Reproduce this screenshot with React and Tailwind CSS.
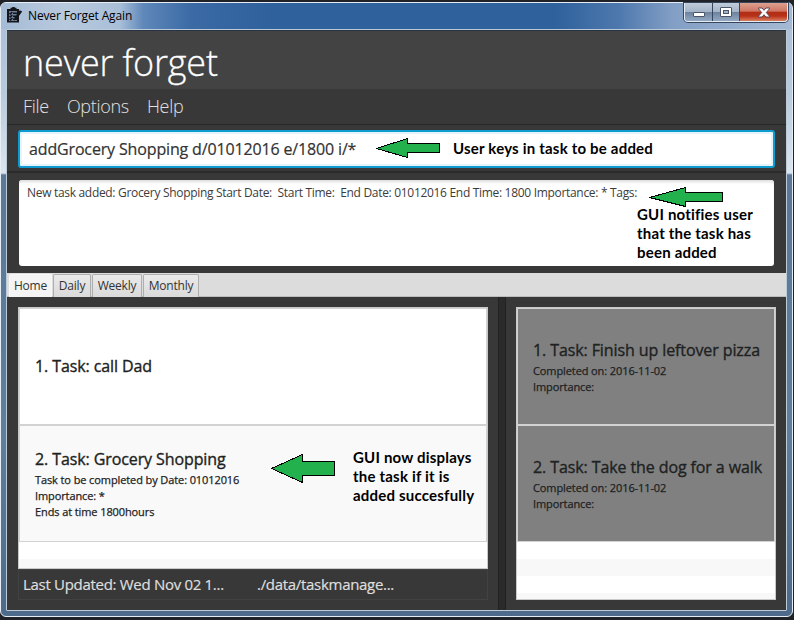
import React from "react";

const Arrow = ({ className, points, w, h }) => (
  <svg width={w} height={h} viewBox={`0 0 ${w} ${h}`} className={className} shapeRendering="crispEdges">
    <polygon points={points} fill="#22b14c" stroke="#000" strokeWidth="1" />
  </svg>
);

const ClipboardIcon = () => (
  <svg width="16" height="17" viewBox="0 0 16 17" className="shrink-0">
    <path d="M0 2h3.500V.8H5L5.500 0h2L8 .8h1.500V2H12v13.500H0z" fill="#14161c" />
    <path d="M2 4h8v10H2z" fill="#6f7f99" />
    <path d="M2.500 6l1 1 1.800-2M2.500 9l1 1 1.800-2M2.500 12l1 1 1.800-2M6 6.200h4M6 9.200h3M6 12.300h4" stroke="#14161c" strokeWidth="1.500" fill="none" />
    <path d="M7.500 10.500L12.800 3.200l2.400 1.300L9.800 12l-2.800 1.600z" fill="#14161c" />
  </svg>
);

const WindowButtons = () => (
  <div className="flex h-[19px] w-[104px] overflow-hidden rounded-b-[4px] border border-t-0 border-[#e4ebf3] shadow-[0_0_0_1px_#35465e]">
    <div className="flex w-[28px] items-center justify-center border-r border-[#37465c] bg-[linear-gradient(#bfccdb_0%,#a5b5c8_48%,#6b819c_50%,#93a9c3_100%)]">
      <div className="mt-[5px] h-[5px] w-[12px] rounded-[1px] border border-[#4b5567] bg-white" />
    </div>
    <div className="flex w-[27px] items-center justify-center border-r border-[#37465c] bg-[linear-gradient(#bfccdb_0%,#a5b5c8_48%,#6b819c_50%,#93a9c3_100%)]">
      <div className="flex h-[10px] w-[12px] items-center justify-center rounded-[1px] border border-[#4b5567] bg-white">
        <div className="h-[4px] w-[6px] border border-[#4b5567] bg-[#a3b2c9]" />
      </div>
    </div>
    <div className="flex flex-1 items-center justify-center bg-[linear-gradient(#dda090_0%,#cf7562_46%,#b22d13_50%,#b83018_72%,#d98060_100%)]">
      <svg width="12" height="11" viewBox="0 0 12 11">
        <path d="M.5 1h3.600L6 3.300 7.900 1h3.600v.8L8.300 5.500l3.200 3.700v.8H7.900L6 7.700 4.100 10H.5v-.8l3.200-3.700L.5 1.800z" fill="#fff" stroke="#5c4450" strokeWidth="1" />
      </svg>
    </div>
  </div>
);

const Task = ({ className, title, lines }) => (
  <div className={`flex flex-col justify-center px-[15px] text-[#1d2222] ${className}`}>
    <div className="mb-[2px] text-[16px] leading-[22px] tracking-[-0.1px] whitespace-nowrap [-webkit-text-stroke:0.35px_#1d2222]">{title}</div>
    {lines.map((line) => (
      <div key={line} className="text-[11px] leading-[16px] tracking-[-0.1px] whitespace-nowrap [-webkit-text-stroke:0.25px_#1d2222]">{line}</div>
    ))}
  </div>
);

const Tab = ({ active, className, children }) => (
  <div className={`flex h-[23px] items-center justify-center rounded-t-[2px] border border-b-0 text-[12px] tracking-[-0.2px] text-[#333] ${active ? "border-[#f8f8f8] bg-[#f4f4f4]" : "border-[#aeaeae] bg-[linear-gradient(#eaeaea,#dadada)]"} ${className}`}>
    {children}
  </div>
);

const Note = ({ className, children }) => (
  <div className={`absolute font-['Lato'] text-[15px] leading-[19px] font-bold tracking-[0.2px] whitespace-nowrap text-black ${className}`}>{children}</div>
);

export default function App() {
  return (
    <div className="relative h-[620px] w-[794px] overflow-hidden bg-[#202227] pt-[2px] font-['Open_Sans',sans-serif]">
      <div className="flex h-[615px] w-[793px] flex-col rounded-[6px] border border-[#e6edf5] bg-[linear-gradient(#a9bdd6_0px,#b7cade_90px,#dbe5ef_170px,#5b7896_172px,#5f7f9f_430px,#4d6a8b_100%)] px-[5px]">
        <header className="-mx-[5px] flex h-[26px] shrink-0 items-start rounded-t-[5px] bg-[linear-gradient(90deg,#a5bbd6_0%,#b8c9dd_8%,#a9bfd9_15%,#5f88ba_18%,#3b6aa5_24%,#2f619c_34%,#2f619c_70%,#4d78ad_78%,#839fc5_85%,#a5b9d4_100%)] pl-[6px]">
          <div className="mt-[4px]"><ClipboardIcon /></div>
          <div className="mt-[3px] ml-[5px] flex-1 text-[12px] leading-[19px] tracking-[-0.14px] text-black">Never Forget Again</div>
          <div className="mr-[4px]"><WindowButtons /></div>
        </header>
        <main className="flex h-[582px] flex-col rounded-[1px] border border-[#bdcad8] bg-[#383838]">
          <div className="flex h-[59px] shrink-0 items-center border-t border-[#273243] bg-[#434343] pl-[16px] text-[36px] font-light tracking-[-0.2px] text-white [-webkit-text-stroke:0.3px_#fff]">
            <div className="mt-[6px] leading-[50px]">never forget</div>
          </div>
          <nav className="flex h-[36px] shrink-0 items-center gap-[18px] border-b border-[#272727] pl-[16px] text-[18px] font-light tracking-[-0.3px] text-[#e2e2e2]">
            <span>File</span><span>Options</span><span>Help</span>
          </nav>
          <div className="h-[48px] shrink-0 border-b-2 border-[#2b2b2b] px-[11px] pt-[5px]">
            <div className="flex h-[38px] items-center rounded-[3px] border-2 border-[#0e9bd0] bg-white px-[9px] pb-[1px] text-[16px] tracking-[-0.15px] text-[#333] shadow-[inset_0_0_0_2px_#e5f4fa] [-webkit-text-stroke:0.2px_#333]">
              addGrocery Shopping d/01012016 e/1800 i/*
            </div>
          </div>
          <div className="h-[100px] shrink-0 px-[12px] pt-[7px]">
            <div className="h-[86px] rounded-[3px] bg-white px-[8px] pt-[4px] text-[12px] leading-[18px] tracking-[-0.31px] whitespace-pre text-[#3c3c3c] shadow-[inset_0_3px_3px_-1px_#ddd]">
              {"New task added: Grocery Shopping Start Date:  Start Time:  End Date: 01012016 End Time: 1800 Importance: * Tags:"}
            </div>
          </div>
          <div className="flex h-[24px] shrink-0 items-start gap-[1px] border-b border-[#bdbdbd] bg-[#dcdcdc] pt-[1px] pl-[2px]">
            <Tab active className="w-[43px]">Home</Tab>
            <Tab className="w-[38px]">Daily</Tab>
            <Tab className="w-[50px]">Weekly</Tab>
            <Tab className="w-[56px]">Monthly</Tab>
          </div>
          <div className="flex min-h-0 flex-1">
            <section className="w-[491px] shrink-0 px-[11px] pt-[10px] pr-[10px]">
              <div className="h-[262px] border border-[#c9c9c9] bg-white">
                <Task className="h-[118px] border border-b-2 border-[#d2d2d2]" title="1. Task: call Dad" lines={[]} />
                <Task className="h-[116px] border border-t-0 border-[#d2d2d2] bg-[#f9f9f9]" title="2. Task: Grocery Shopping" lines={["Task to be completed by Date: 01012016", "Importance: *", "Ends at time 1800hours"]} />
                <div className="h-[17px]" />
                <div className="h-[9px] bg-[#f8f8f8]" />
              </div>
              <div className="flex h-[31px] items-center border border-[#424242] pl-[4px] text-[15px] tracking-[-0.3px] text-[#dedede] [-webkit-text-stroke:0.2px_#dedede]">
                <span className="w-[234px]">Last Updated: Wed Nov 02 1...</span>
                <span>./data/taskmanage...</span>
              </div>
            </section>
            <div className="w-[8px] shrink-0 border-x border-[#222] bg-[#2b2b2b]" />
            <section className="flex-1 pt-[10px] pl-[10px]">
              <div className="h-[293px] w-[260px] border border-[#c9c9c9] bg-white">
                <Task className="h-[118px] border border-b-2 border-[#d2d2d2] bg-[#808080]" title="1. Task: Finish up leftover pizza" lines={["Completed on: 2016-11-02", "Importance:"]} />
                <Task className="h-[116px] border border-t-0 border-[#d2d2d2] bg-[#808080]" title="2. Task: Take the dog for a walk" lines={["Completed on: 2016-11-02", "Importance:"]} />
                <div className="h-[17px]" />
                <div className="h-[17px] bg-[#f8f8f8]" />
                <div className="h-[17px]" />
                <div className="h-[6px] bg-[#f8f8f8]" />
              </div>
            </section>
          </div>
        </main>
      </div>

      <Arrow className="absolute top-[138px] left-[376px]" w={65} h={20} points="0.5,10.5 31.5,0.5 31.5,5.5 63.5,5.5 63.5,14.5 31.5,14.5 31.5,19.5" />
      <Note className="top-[139px] left-[453px]">User keys in task to be added</Note>
      <Arrow className="absolute top-[187px] left-[649px]" w={75} h={20} points="0.5,10.5 36.5,0.5 36.5,5.5 73.5,5.5 73.5,14.5 36.5,14.5 36.5,19.5" />
      <Note className="top-[205px] left-[637px]">GUI notifies user<br />that the task has<br />been added</Note>
      <Arrow className="absolute top-[454px] left-[271px]" w={65} h={29} points="0.5,14.5 31.5,0.5 31.5,7.5 63.5,7.5 63.5,21.5 31.5,21.5 31.5,28.5" />
      <Note className="top-[448px] left-[353px]">GUI now displays<br />the task if it is<br />added succesfully</Note>
    </div>
  );
}
